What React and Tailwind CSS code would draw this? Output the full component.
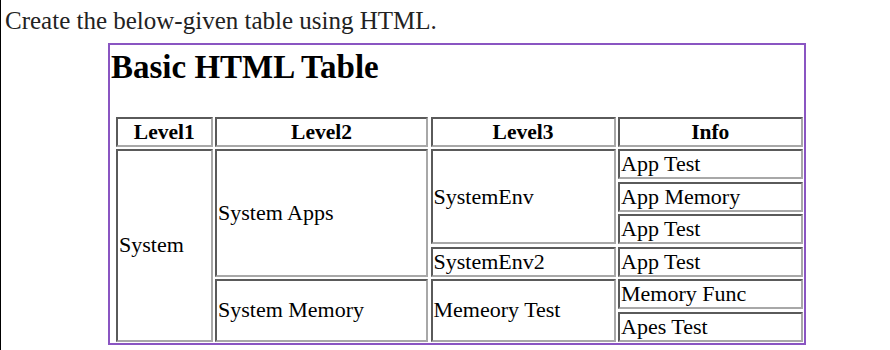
import React from 'react';

const serif = "font-['Liberation_Serif','Times_New_Roman',serif]";

function Cell({ children, className = '', head = false }) {
  return (
    <div
      className={`flex items-center border-2 border-t-[#5a5a5a] border-l-[#5a5a5a] border-b-[#a8a8a8] border-r-[#a8a8a8] px-[1px] leading-[24px] text-black ${
        head ? 'justify-center font-bold text-[21.5px]' : 'text-[22px]'
      } ${className}`}
    >
      {children}
    </div>
  );
}

export default function App() {
  return (
    <div className={`h-[350px] w-[890px] border-l border-black bg-white ${serif}`}>
      <p className="pt-[6px] pl-[4px] text-[25px] leading-[29px] text-[#222]">Create the below-given table using HTML.</p>

      <div className="ml-[107px] mt-[8px] h-[302px] w-[698px] border-2 border-[#8a55c2]">
        <h1 className="mt-[4px] ml-[1px] text-[33px] leading-[37px] font-bold text-black">Basic HTML Table</h1>

        {/* table */}
        <div className="ml-[6px] mt-[31px] grid grid-cols-[96.5px_213px_185px_184.5px] grid-rows-[29.5px_30px_30px_30px_30px_30px_30px] gap-[2.5px]">
          <Cell head>Level1</Cell>
          <Cell head>Level2</Cell>
          <Cell head>Level3</Cell>
          <Cell head>Info</Cell>

          <Cell className="row-span-6">System</Cell>
          <Cell className="row-span-4">System Apps</Cell>
          <Cell className="row-span-3">SystemEnv</Cell>
          <Cell>App Test</Cell>
          <Cell className="col-start-4">App Memory</Cell>
          <Cell className="col-start-4">App Test</Cell>
          <Cell className="col-start-3">SystemEnv2</Cell>
          <Cell>App Test</Cell>
          <Cell className="col-start-2 row-span-2">System Memory</Cell>
          <Cell className="row-span-2">Memeory Test</Cell>
          <Cell>Memory Func</Cell>
          <Cell className="col-start-4">Apes Test</Cell>
        </div>
      </div>
    </div>
  );
}
